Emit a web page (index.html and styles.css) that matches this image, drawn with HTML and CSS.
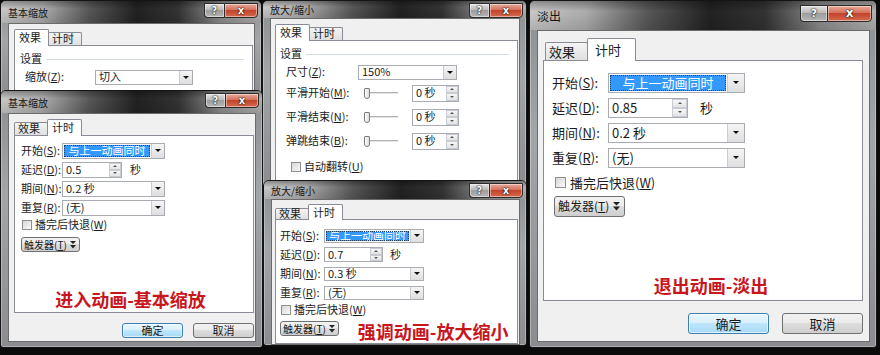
FILE: index.html
```html
<!DOCTYPE html>
<html lang="zh-CN">
<head>
    <meta charset="UTF-8">
    <title>动画效果选项</title>
    <link rel="stylesheet" href="styles.css">
</head>
<body>

    <!-- 基本缩放：效果页（被下面的窗口盖住一半） -->
    <div class="win win-a">
        <div class="titlebar">
            <span class="title">基本缩放</span>
            <div class="caps"><span class="cap help">?</span><span class="cap close">x</span></div>
        </div>
        <div class="client">
            <div class="tabs"><span class="tab on">效果</span><span class="tab">计时</span></div>
            <div class="panel">
                <div class="group"><span>设置</span><i class="rule"></i></div>
                <div class="row sub">
                    <span class="lbl">缩放(<u>Z</u>):</span>
                    <div class="combo"><span class="val">切入</span><span class="dd"></span></div>
                </div>
            </div>
        </div>
    </div>

    <!-- 基本缩放：计时页 -->
    <div class="win win-b">
        <div class="titlebar">
            <span class="title">基本缩放</span>
            <div class="caps"><span class="cap help">?</span><span class="cap close">x</span></div>
        </div>
        <div class="client">
            <div class="tabs"><span class="tab">效果</span><span class="tab on">计时</span></div>
            <div class="panel">
                <div class="form">
                    <div class="row"><span class="lbl">开始(<u>S</u>):</span><div class="combo"><span class="val sel">与上一动画同时</span><span class="dd"></span></div></div>
                    <div class="row"><span class="lbl">延迟(<u>D</u>):</span><div class="spin"><span class="val">0.5</span><span class="arrows"><i class="up"></i><i class="down"></i></span></div><span class="unit">秒</span></div>
                    <div class="row"><span class="lbl">期间(<u>N</u>):</span><div class="combo"><span class="val">0.2 秒</span><span class="dd"></span></div></div>
                    <div class="row"><span class="lbl">重复(<u>R</u>):</span><div class="combo"><span class="val">(无)</span><span class="dd"></span></div></div>
                    <div class="check"><span class="chk"></span><span>播完后快退(<u>W</u>)</span></div>
                    <div class="trig-row">
                        <span class="trig"><span>触发器(<u>T</u>)</span><svg width="6" height="8" viewBox="0 0 6 8"><path d="M0 0h6L3 3z M0 4h6L3 7.5z" fill="#222"/></svg></span>
                    </div>
                </div>
                <div class="note">进入动画-基本缩放</div>
            </div>
            <div class="actions"><span class="btn ok">确定</span><span class="btn">取消</span></div>
        </div>
    </div>

    <!-- 放大/缩小：效果页 -->
    <div class="win win-c">
        <div class="titlebar">
            <span class="title">放大/缩小</span>
            <div class="caps"><span class="cap help">?</span><span class="cap close">x</span></div>
        </div>
        <div class="client">
            <div class="tabs"><span class="tab on">效果</span><span class="tab">计时</span></div>
            <div class="panel">
                <div class="group"><span>设置</span><i class="rule"></i></div>
                <div class="row sub">
                    <span class="lbl">尺寸(<u>Z</u>):</span>
                    <div class="combo"><span class="val">150%</span><span class="dd"></span></div>
                </div>
                <div class="row sub tall">
                    <span class="lbl">平滑开始(<u>M</u>):</span>
                    <div class="slider"><span class="thumb"></span><span class="track"></span></div>
                    <div class="spin"><span class="val">0 秒</span><span class="arrows"><i class="up"></i><i class="down"></i></span></div>
                </div>
                <div class="row sub tall">
                    <span class="lbl">平滑结束(<u>N</u>):</span>
                    <div class="slider"><span class="thumb"></span><span class="track"></span></div>
                    <div class="spin"><span class="val">0 秒</span><span class="arrows"><i class="up"></i><i class="down"></i></span></div>
                </div>
                <div class="row sub tall">
                    <span class="lbl">弹跳结束(<u>B</u>):</span>
                    <div class="slider"><span class="thumb"></span><span class="track"></span></div>
                    <div class="spin"><span class="val">0 秒</span><span class="arrows"><i class="up"></i><i class="down"></i></span></div>
                </div>
                <div class="check sub"><span class="chk"></span><span>自动翻转(<u>U</u>)</span></div>
            </div>
        </div>
    </div>

    <!-- 放大/缩小：计时页 -->
    <div class="win win-d">
        <div class="titlebar">
            <span class="title">放大/缩小</span>
            <div class="caps"><span class="cap help">?</span><span class="cap close">x</span></div>
        </div>
        <div class="client">
            <div class="tabs"><span class="tab">效果</span><span class="tab on">计时</span></div>
            <div class="panel">
                <div class="form">
                    <div class="row"><span class="lbl">开始(<u>S</u>):</span><div class="combo"><span class="val sel">与上一动画同时</span><span class="dd"></span></div></div>
                    <div class="row"><span class="lbl">延迟(<u>D</u>):</span><div class="spin"><span class="val">0.7</span><span class="arrows"><i class="up"></i><i class="down"></i></span></div><span class="unit">秒</span></div>
                    <div class="row"><span class="lbl">期间(<u>N</u>):</span><div class="combo"><span class="val">0.3 秒</span><span class="dd"></span></div></div>
                    <div class="row"><span class="lbl">重复(<u>R</u>):</span><div class="combo"><span class="val">(无)</span><span class="dd"></span></div></div>
                    <div class="check"><span class="chk"></span><span>播完后快退(<u>W</u>)</span></div>
                    <div class="trig-row">
                        <span class="trig"><span>触发器(<u>T</u>)</span><svg width="6" height="8" viewBox="0 0 6 8"><path d="M0 0h6L3 3z M0 4h6L3 7.5z" fill="#222"/></svg></span>
                        <span class="note">强调动画-放大缩小</span>
                    </div>
                </div>
            </div>
        </div>
    </div>

    <!-- 淡出：计时页 -->
    <div class="win win-e">
        <div class="titlebar">
            <span class="title">淡出</span>
            <div class="caps"><span class="cap help">?</span><span class="cap close">x</span></div>
        </div>
        <div class="client">
            <div class="tabs"><span class="tab">效果</span><span class="tab on">计时</span></div>
            <div class="panel">
                <div class="form">
                    <div class="row"><span class="lbl">开始(<u>S</u>):</span><div class="combo"><span class="val sel">与上一动画同时</span><span class="dd"></span></div></div>
                    <div class="row"><span class="lbl">延迟(<u>D</u>):</span><div class="spin"><span class="val">0.85</span><span class="arrows"><i class="up"></i><i class="down"></i></span></div><span class="unit">秒</span></div>
                    <div class="row"><span class="lbl">期间(<u>N</u>):</span><div class="combo"><span class="val">0.2 秒</span><span class="dd"></span></div></div>
                    <div class="row"><span class="lbl">重复(<u>R</u>):</span><div class="combo"><span class="val">(无)</span><span class="dd"></span></div></div>
                    <div class="check"><span class="chk"></span><span>播完后快退(<u>W</u>)</span></div>
                    <div class="trig-row">
                        <span class="trig"><span>触发器(<u>T</u>)</span><svg width="7" height="9" viewBox="0 0 7 9"><path d="M0 0h7L3.5 3.5z M0 4.5h7L3.5 8.5z" fill="#222"/></svg></span>
                    </div>
                </div>
                <div class="note">退出动画-淡出</div>
            </div>
            <div class="actions"><span class="btn ok">确定</span><span class="btn">取消</span></div>
        </div>
    </div>

</body>
</html>
```

FILE: styles.css
```css
* {
    box-sizing: border-box;
}

/* 黑色底，几个对话框拼在上面 */
body {
    margin: 0;
    width: 880px;
    height: 355px;
    position: relative;
    overflow: hidden;
    background: #0b0b0b;
    font-family: "Noto Sans CJK SC", "Noto Sans", sans-serif;
    font-size: 11px;
    line-height: 1.2;
    color: #1b1b1b;
}

u {
    text-decoration: underline;
    text-underline-offset: 1px;
}

/* 窗口外框 (Win7 风格) */
.win {
    position: absolute;
    display: flex;
    flex-direction: column;
    padding: 0 6px 5px 7px;
    border: 1px solid #151515;
    border-radius: 6px 6px 3px 3px;
    background: linear-gradient(#8c8f92, #a3a6a9 40%, #8a8c8f);
    box-shadow: inset 0 0 0 1px rgba(255, 255, 255, 0.3);
    overflow: hidden;
}

.win-a { left: 0; top: 0; width: 262px; height: 98px; }
.win-b { left: 0; top: 90px; width: 263px; height: 258px; }
.win-c { left: 262px; top: 0; width: 265px; height: 188px; }
.win-d { left: 263px; top: 180px; width: 264px; height: 166px; padding-bottom: 0; }
.win-e { left: 529px; top: 0; width: 348px; height: 348px; font-size: 13px; }

/* 标题栏：毛玻璃效果 */
.titlebar {
    display: flex;
    justify-content: space-between;
    height: 22px;
    margin: 0 -6px 0 -7px;
    padding: 0 3px 0 7px;
    background:
        linear-gradient(rgba(0, 0, 0, 0.3), rgba(0, 0, 0, 0) 35%, rgba(0, 0, 0, 0.12)),
        linear-gradient(to right, #c8c8c8, #adadad 16%, #575757 34%, #222 52%, #333 68%, #8d8d8d 84%, #b2b2b2);
}

.title {
    align-self: center;
    font-size: 10px;
    color: #161616;
    padding-top: 1px;
}

.caps {
    display: flex;
    height: 15px;
    margin-top: 2px;
}

.cap {
    display: flex;
    align-items: center;
    justify-content: center;
    border: 1px solid #2b2b2b;
    color: #fff;
    font-family: "DejaVu Sans", sans-serif;
    font-weight: bold;
    font-size: 10px;
    text-shadow: 0 0 2px #000, 0 0 1px #000;
    box-shadow: inset 0 0 0 1px rgba(255, 255, 255, 0.45);
}

.help {
    width: 20px;
    border-right: 0;
    border-radius: 0 0 0 4px;
    background: linear-gradient(#e2e2e2, #bababa 45%, #9d9d9d 50%, #b6b6b6);
}

.close {
    width: 34px;
    border-radius: 0 0 4px 0;
    background: linear-gradient(#eaa99b, #d4725c 45%, #c2442c 50%, #d46a4f);
}

/* 客户区 */
.client {
    flex: 1;
    display: flex;
    flex-direction: column;
    padding: 4px 1px 0 5px;
    background: #f0f0f0;
    border: 1px solid #6b6b6b;
}

/* 选项卡 */
.tabs {
    display: flex;
    align-items: flex-end;
    height: 17px;
}

.tab {
    width: 34px;
    height: 13px;
    padding-left: 3px;
    margin-right: -1px;
    border: 1px solid #898c95;
    border-bottom: 0;
    border-radius: 2px 2px 0 0;
    background: linear-gradient(#f4f4f4, #e0e0e0);
    display: flex;
    align-items: center;
}

.tab.on {
    width: 35px;
    height: 17px;
    padding-left: 4px;
    margin-bottom: -1px;
    background: #fff;
    position: relative;
    z-index: 1;
}

.panel {
    flex: 1;
    display: flex;
    flex-direction: column;
    background: #fff;
    border: 1px solid #898c95;
}

/* 分组标题 "设置" */
.group {
    display: flex;
    align-items: center;
    height: 16px;
    margin: 5px 8px 1px 5px;
}

.rule {
    flex: 1;
    margin-left: 4px;
    border-top: 1px solid #d5dde3;
}

/* 表单行 */
.form {
    display: flex;
    flex-direction: column;
    padding: 5px 0 0 6px;
}

.row {
    display: flex;
    align-items: center;
    height: 19px;
}

.row.sub {
    height: 18px;
    padding-left: 10px;
}

.row.tall {
    height: 24px;
}

.lbl {
    width: 41px;
    flex: none;
}

.combo,
.spin {
    display: flex;
    height: 16px;
    border: 1px solid #a9acb2;
    background: #fff;
}

.combo {
    width: 103px;
}

.spin {
    width: 60px;
}

.val {
    flex: 1;
    display: flex;
    align-items: center;
    padding-left: 3px;
    white-space: nowrap;
}

.val.sel {
    margin: 1px;
    background: #3399ff;
    color: #fff;
    justify-content: center;
    padding-left: 0;
    outline: 1px dotted #1c3f66;
    outline-offset: -1px;
}

/* 下拉按钮 */
.dd {
    width: 13px;
    flex: none;
    border-left: 1px solid #c9ccd1;
    background: linear-gradient(#f5f5f5, #dedede);
    display: flex;
    align-items: center;
    justify-content: center;
}

.dd::after {
    content: "";
    border-left: 3px solid transparent;
    border-right: 3px solid transparent;
    border-top: 3px solid #111;
}

/* 数值微调按钮 */
.arrows {
    width: 12px;
    flex: none;
    display: flex;
    flex-direction: column;
}

.arrows i {
    flex: 1;
    border: 1px solid #c8ccd2;
    background: linear-gradient(#f7f7f7, #e3e3e3);
    display: flex;
    align-items: center;
    justify-content: center;
}

.arrows i::after {
    content: "";
    border-left: 2px solid transparent;
    border-right: 2px solid transparent;
}

.arrows .up::after { border-bottom: 2px solid #555; }
.arrows .down::after { border-top: 2px solid #555; }

.unit {
    margin-left: 8px;
}

/* 滑块 */
.slider {
    width: 34px;
    height: 14px;
    margin-left: 6px;
    margin-right: 14px;
    display: flex;
    align-items: center;
}

.thumb {
    width: 6px;
    height: 11px;
    flex: none;
    border: 1px solid #7c7c7c;
    border-radius: 1px 1px 3px 3px;
    background: linear-gradient(to right, #fff, #dcdcdc);
}

.track {
    flex: 1;
    height: 3px;
    border-top: 1px solid #b3b3b3;
    border-bottom: 1px solid #fff;
    background: #e4e4e4;
}

/* 复选框 */
.check {
    display: flex;
    align-items: center;
    height: 16px;
    padding-left: 1px;
}

.check.sub {
    height: 28px;
    padding-left: 15px;
}

.chk {
    width: 10px;
    height: 10px;
    margin-right: 3px;
    border: 1px solid #8e8f8f;
    background: linear-gradient(135deg, #d6d6d6, #fafafa);
}

/* 触发器按钮 */
.trig-row {
    display: flex;
    align-items: flex-start;
    margin-top: 4px;
}

.trig {
    display: flex;
    align-items: center;
    gap: 3px;
    height: 15px;
    padding: 0 3px 0 2px;
    border: 1px solid #707070;
    border-radius: 3px;
    background: linear-gradient(#f2f2f2, #ebebeb 45%, #dddddd 50%, #cfcfcf);
    font-size: 10px;
    white-space: nowrap;
}

/* 红色说明文字 */
.note {
    margin-top: auto;
    color: #c8161d;
    font-size: 18px;
    font-weight: 700;
    line-height: 24px;
    text-align: center;
    padding-right: 7px;
    white-space: nowrap;
}

/* 确定 / 取消 */
.actions {
    display: flex;
    justify-content: flex-end;
    gap: 10px;
    margin-top: 10px;
}

.btn {
    width: 61px;
    height: 15px;
    border: 1px solid #707070;
    border-radius: 3px;
    display: flex;
    align-items: center;
    justify-content: center;
    background: linear-gradient(#f2f2f2, #ebebeb 45%, #dddddd 50%, #cfcfcf);
}

.btn.ok {
    border-color: #3c7fb1;
    background: linear-gradient(#eaf6fd, #d9f0fc 45%, #bee6fd 50%, #a7d9f5);
    box-shadow: inset 0 0 0 1px rgba(255, 255, 255, 0.6);
}

/* ---- 各窗口的尺寸差异 ---- */

.win-a .lbl { width: 70px; }
.win-a .combo { width: 98px; height: 15px; }

.win-b .panel { flex: none; height: 178px; }
.win-b .note { height: 25px; }

.win-c .client { padding-left: 4px; }
.win-c .group { margin-left: 4px; }
.win-c .row.sub { padding-left: 10px; }
.win-c .lbl { width: 72px; }
.win-c .combo { width: 99px; height: 15px; }
.win-c .spin { width: 47px; height: 17px; }
.win-c .check.sub { padding-left: 15px; }

.win-d .client { padding-left: 3px; }
.win-d .tabs { height: 15px; }
.win-d .tab { height: 11px; }
.win-d .tab.on { height: 16px; }
.win-d .form { padding: 6px 0 0 4px; }
.win-d .lbl { width: 44px; }
.win-d .combo { width: 100px; height: 14px; }
.win-d .spin { width: 59px; height: 15px; }
.win-d .unit { margin-left: 7px; }
.win-d .trig-row { margin-top: 3px; }
.win-d .note { margin: -2px 0 0 19px; padding: 0; }

.win-e .titlebar { height: 29px; padding-right: 4px; }
.win-e .title { font-size: 12px; }
.win-e .caps { height: 17px; margin-top: 4px; }
.win-e .help { width: 27px; font-size: 11px; }
.win-e .close { width: 45px; font-size: 12px; }
.win-e .client { padding: 7px 6px 0 5px; }
.win-e .tabs { height: 22px; }
.win-e .tab { width: 43px; height: 18px; padding-left: 3px; }
.win-e .tab:first-child { margin-left: 2px; }
.win-e .tab.on { width: 49px; height: 23px; padding-left: 7px; }
.win-e .panel { flex: none; height: 241px; }
.win-e .form { padding: 9px 0 0 8px; }
.win-e .row { height: 25px; }
.win-e .lbl { width: 56px; }
.win-e .combo { width: 137px; height: 20px; }
.win-e .spin { width: 80px; height: 20px; }
.win-e .dd { width: 17px; }
.win-e .arrows { width: 15px; }
.win-e .unit { margin-left: 12px; }
.win-e .check { height: 25px; padding-left: 3px; }
.win-e .chk { width: 11px; height: 11px; margin-right: 4px; }
.win-e .trig-row { margin-top: 1px; padding-left: 2px; }
.win-e .trig { height: 21px; padding: 0 4px 0 3px; gap: 4px; font-size: 12px; }
.win-e .note { height: 28px; line-height: 28px; margin-bottom: 1px; padding: 0 0 0 16px; }
.win-e .actions { gap: 13px; margin-top: 12px; }
.win-e .btn { width: 81px; height: 21px; }
```
